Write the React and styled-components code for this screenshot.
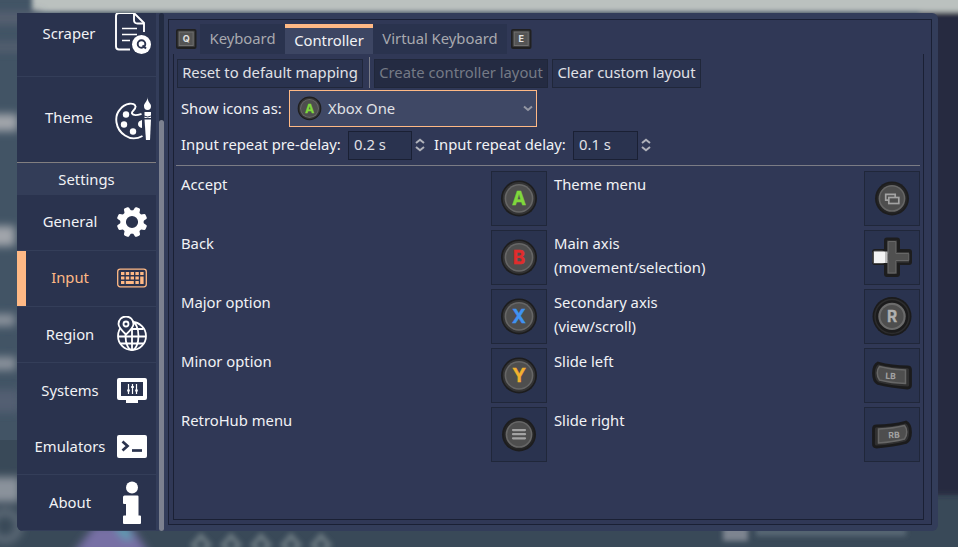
import React from "react";
import styled, { createGlobalStyle, css } from "styled-components";

const c = {
  dialog: "#333d5a",
  panel: "#303856",
  dark: "#2a334e",
  line: "#1a2034",
  text: "#f1f2f5",
  soft: "#e0e1e6",
  accent: "#ffb985",
};

const Global = createGlobalStyle`
  *{box-sizing:border-box}
  html,body{margin:0;padding:0}
  body{font-family:"Noto Sans",sans-serif;font-size:14.8px;color:${c.text};overflow:hidden}
`;

const Screen = styled.div`
  position: relative;
  width: 958px;
  height: 547px;
  padding: 13px 20px 16px 17px;
  overflow: hidden;
  background: #3a4b5c;
`;
const Backdrop = styled.svg`
  position: absolute;
  inset: 0;
`;
const Dialog = styled.div`
  position: relative;
  display: flex;
  width: 921px;
  height: 518px;
  background: ${c.dialog};
  border-radius: 0 6px 6px 6px;
  overflow: hidden;
`;
const Sidebar = styled.nav`
  width: 139px;
  height: 518px;
  overflow: hidden;
  background: ${c.dark};
`;
const NavList = styled.div`
  margin-top: -21px;
`;
const NavItem = styled.div`
  display: flex;
  align-items: center;
  height: ${(p) => (p.$tall ? 85 : 56)}px;
  padding-right: ${(p) => (p.$tall ? 5 : 9)}px;
  padding-bottom: 1px;
  border-bottom: 1px solid ${(p) => (p.$plain ? "transparent" : "#343e59")};
  color: ${(p) => (p.$active ? c.accent : c.text)};
  box-shadow: ${(p) => (p.$active ? `inset 9px 0 ${c.accent}` : "none")};
  svg { flex: none; display: block; }
`;
const NavLabel = styled.span`
  flex: 1;
  text-align: center;
  padding: 0 0 ${(p) => (p.$raised ? 3 : 1)}px 6px;
`;
const SectionTitle = styled.div`
  height: 33px;
  border-top: 1px solid #827f80;
  background: #333d58;
  display: flex;
  align-items: center;
  justify-content: center;
`;
const ScrollTrack = styled.div`
  width: 5px;
  margin-left: 3px;
  padding-top: 107px;
  background: #222b41;
  border-radius: 3px;
`;
const ScrollThumb = styled.div`
  height: 411px;
  background: #7c818f;
  border-radius: 3px;
`;
const Main = styled.main`
  width: 764px;
  height: 506px;
  margin: 6px 0 0 4px;
  padding: 4px 7px 4px 4px;
  border: 1px solid ${c.line};
  background: ${c.panel};
`;
const TabBar = styled.div`
  display: flex;
  align-items: center;
  height: 30px;
  padding-left: 3px;
`;
const Tab = styled.div`
  height: 30px;
  width: ${(p) => p.$w}px;
  display: flex;
  align-items: center;
  justify-content: center;
  background: ${c.dark};
  color: #a8a9af;
  padding-bottom: 2px;
  ${(p) => p.$active && css`
    background: #3d4663;
    color: ${c.text};
    border-top: 4px solid ${c.accent};
    padding-bottom: 2px;
  `}
`;
const KeyCap = styled.svg`
  flex: none;
  margin: ${(p) => (p.$right ? "0 0 0 4px" : "0 3px 0 0")};
`;
const TabPanel = styled.section`
  height: 466px;
  border: 1px solid ${c.line};
  border-top: 0;
  padding: 3px 3px 0 2px;
`;
const Toolbar = styled.div`
  display: flex;
  align-items: center;
  height: 32px;
  padding-left: 1px;
`;
const Button = styled.button`
  width: ${(p) => p.$w}px;
  height: 29px;
  padding: 0 0 2px;
  font: inherit;
  white-space: nowrap;
  color: ${c.soft};
  background: #2a334f;
  border: 1px solid #20273a;
  &:disabled { color: #757a86; background: #242b42; }
`;
const Divider = styled.div`
  width: 1px;
  height: 31px;
  margin: 0 4px 1px 6px;
  background: #7b7d88;
`;
const Gap = styled.div`
  width: 4px;
`;
const Field = styled.div`
  display: flex;
  align-items: center;
  padding-left: 5px;
  height: ${(p) => p.$h}px;
  margin-top: ${(p) => p.$mt}px;
`;
const FieldLabel = styled.span`
  width: ${(p) => p.$w}px;
  white-space: nowrap;
  padding-bottom: ${(p) => (p.$raised ? 3 : 1)}px;
`;
const Select = styled.div`
  display: flex;
  align-items: center;
  width: 248px;
  height: 37px;
  padding: 0 3px 0 7px;
  background: #3f4865;
  border: 1px solid ${c.accent};
`;
const SelectText = styled.span`
  flex: 1;
  padding: 0 0 1px 6px;
  color: ${c.soft};
`;
const NumberBox = styled.div`
  width: ${(p) => p.$w}px;
  height: 29px;
  padding-left: 5px;
  line-height: 25px;
  color: ${c.soft};
  background: #2a334f;
  border: 1px solid ${c.line};
`;
const Spinner = styled.svg`
  margin: 0 9px 2px 3px;
`;
const Rule = styled.div`
  height: 1px;
  background: #7b7c85;
  margin-top: 5px;
`;
const Mappings = styled.div`
  display: grid;
  grid-template-columns: 315px 56px 7px 310px 56px;
  grid-auto-rows: 55px;
  row-gap: 4px;
  margin-top: 5px;
`;
const Action = styled.div`
  grid-column: ${(p) => p.$col};
  padding: ${(p) => (p.$col === 1 ? "1px 0 0 5px" : "1px 0 0 0")};
  line-height: 24px;
  white-space: pre-line;
`;
const Slot = styled.div`
  width: 56px;
  height: 55px;
  background: #2a334f;
  border: 1px solid #20273a;
  svg { display: block; margin: -1px; }
`;

const fontUI = '"Inter", sans-serif';

const Letter = ({ x = 28, y, size, fill, children, ...rest }) => (
  <text x={x} y={y} textAnchor="middle" fontFamily={fontUI} fontWeight="700" fontSize={size} fill={fill} {...rest}>
    {children}
  </text>
);

const Disc = ({ r = 18, ring = "#333334" }) => (
  <>
    <circle cx="28" cy="27.4" r={r} fill="#1d1d1e" />
    <circle cx="28" cy="27.4" r={r - 1.7} fill={ring} />
    <circle cx="28" cy="27.4" r={r - 3.6} fill="#666" />
    <circle cx="28" cy="27.4" r={r - 5.2} fill="#4e4e4e" />
  </>
);

const faces = { A: "#80d83c", B: "#e02c2c", X: "#3f93f2", Y: "#f2b12f" };

function Glyph({ name }) {
  if (faces[name])
    return (
      <>
        <Disc />
        <Letter y="34" size="18.8" fill={faces[name]} stroke={faces[name]} strokeWidth=".4">{name}</Letter>
      </>
    );
  switch (name) {
    case "menu":
      return (
        <>
          <Disc r={17} ring="#242425" />
          <path d="M22 23.1h12M22 27.2h12M22 31.3h12" stroke="#a3a3a3" strokeWidth="2.2" strokeLinecap="round" />
        </>
      );
    case "view":
      return (
        <>
          <Disc r={17} ring="#242425" />
          <path d="M24.5 29.2h-2.800v-5.900h9.500v2.600" fill="none" stroke="#a3a3a3" strokeWidth="1.7" />
          <rect x="24.8" y="26.5" width="10" height="6" fill="#4e4e4e" stroke="#a3a3a3" strokeWidth="1.7" />
        </>
      );
    case "dpad":
      return (
        <>
          <path d="M23 7.500h10q3 0 3 3V19h9q3 0 3 3v10q0 3-3 3h-9v9q0 3-3 3H23q-3 0-3-3v-9h-9q-3 0-3-3V22q0-3 3-3h9v-8.500q0-3 3-3z" fill="#1d1d1e" />
          <path d="M23 10.500h10v11.500h12v10.500H33v11.500H23V32.500H11V22h12z" fill="#3a3a3a" />
          <path d="M24.200 11.500h7.600v12h13v7h-13v12.500h-7.600V30.500h-13v-7h13z" fill="#505050" stroke="#676767" />
          <rect x="8.500" y="20.500" width="12" height="13.500" rx="2.500" fill="#505050" />
          <rect x="10" y="21.500" width="11" height="11.500" fill="#f4f4f4" />
          <rect x="21" y="21.500" width="2.500" height="11.500" fill="#bdbdbd" />
        </>
      );
    case "stick":
      return (
        <>
          <circle cx="28" cy="27.400" r="19.500" fill="#1b1b1c" />
          <circle cx="28" cy="27.400" r="17" fill="none" stroke="#2c2c2d" strokeWidth="1.500" />
          <circle cx="28" cy="27.400" r="13.700" fill="#6b6b6b" />
          <circle cx="28" cy="27.400" r="11.500" fill="#4e4e4e" />
          <Letter y="33" size="15.500" fill="#b0b0b0" stroke="#b0b0b0" strokeWidth=".3">R</Letter>
        </>
      );
    case "lb":
      return (
        <>
          <path d="M14 15Q28 18.800 43.500 18.800q3 0 3 3V37q0 3-3 3Q26 38.800 14 35.500C8 32.500 8 18 14 15z" fill="#303031" stroke="#1b1b1c" strokeWidth="2.800" />
          <path d="M15.500 18.500Q27 21.500 41.500 22V35.500Q27 35 15.500 32C12.500 28 12.500 22 15.500 18.500z" fill="#4e4e4e" stroke="#676767" strokeWidth="1.500" />
          <Letter x="26.500" y="31" size="8.500" fill="#a3a3a3" transform="rotate(3 27 28)">LB</Letter>
        </>
      );
    default:
      return (
        <>
          <path d="M42 15Q28 18.800 12.500 18.800q-3 0-3 3V37q0 3 3 3Q30 38.800 42 35.500C48 32.500 48 18 42 15z" fill="#303031" stroke="#1b1b1c" strokeWidth="2.800" />
          <path d="M40.500 18.500Q29 21.500 14.500 22V36Q29 35 40.500 32C43.500 28 43.500 22 40.500 18.500z" fill="#4e4e4e" stroke="#676767" strokeWidth="1.500" />
          <Letter x="30" y="31" size="8.500" fill="#a3a3a3" transform="rotate(-3 30 28)">RB</Letter>
        </>
      );
  }
}

const GlyphSvg = ({ name }) => (
  <svg width="56" height="55" viewBox="0 0 56 55"><Glyph name={name} /></svg>
);

const Key = ({ label, right }) => (
  <KeyCap $right={right} width="21" height="20" viewBox="0 0 21 20">
    <rect width="20.500" height="20" rx="2" fill="#202021" />
    <rect x="1.500" y="1.500" width="17.500" height="16.500" rx="1" fill="#393939" />
    <rect x="3.200" y="3" width="14" height="13.500" fill="#545454" stroke="#707070" />
    <Letter x="10.300" y="13.100" size="9" fill="#e2e2e2">{label}</Letter>
  </KeyCap>
);

const ScraperIcon = () => (
  <svg width="36" height="43" viewBox="0 0 36 43" fill="none" stroke="#fff" strokeWidth="1.900">
    <path d="M15 37.500H4Q1 37.500 1 34.500V4Q1 1 4 1h15l10 10v9" />
    <path d="M19 1v7q0 3.500 3.500 3.500H29" />
    <path d="M7 16.500h15M7 22.500h15M7 28.500h8" strokeWidth="1.600" />
    <circle cx="26.500" cy="32.500" r="9.500" fill="#fff" stroke="none" />
    <circle cx="26.500" cy="32" r="3.800" stroke={c.dark} />
    <path d="M27.500 33.500l3.500 3" stroke={c.dark} />
  </svg>
);
const ThemeIcon = () => (
  <svg width="36" height="43" viewBox="0 0 36 43" fill="none" stroke="#fff" strokeWidth="1.900">
    <path d="M27.500 39Q18 44 10 38.500C0 32 -1 19 5 12.500C10 5.500 20 5 20.500 9.500C21 13 16 14 17 16.500C18.500 19.500 23 18 26.500 17" />
    <g fill="#fff" stroke="none">
      <circle cx="11" cy="17.500" r="3.200" /><circle cx="9" cy="27.500" r="3.200" />
      <circle cx="18" cy="34.500" r="3.200" /><path d="M27 23v8q-4-1-4-4t4-4z" />
      <path d="M33 0C32 5 36 6 36 9q0 4-3.500 4T29 9c0-3 3-4 4-9zM29.500 15h6.500v6h-6.500z" />
      <path d="M29.500 22.500H36L35 43.500h-4z" />
    </g>
    <path d="M29 19q4 2 7 0" stroke={c.dark} strokeWidth="1" />
  </svg>
);
const GearIcon = () => (
  <svg width="30" height="30" viewBox="0 0 30 30">
    <g fill="#fff">
      {[22.5, 67.5, 112.5, 157.5, 202.5, 247.5, 292.5, 337.5].map((a) => (
        <path key={a} d="M11.400 5L12.200.7Q12.500-.3 13.700-.3h2.600q1.200 0 1.500 1L18.600 5z" transform={`rotate(${a} 15 15)`} />
      ))}
    </g>
    <circle cx="15" cy="15" r="8.900" fill="none" stroke="#fff" strokeWidth="5.600" />
  </svg>
);
const KeyboardIcon = () => (
  <svg width="30" height="30" viewBox="0 0 30 30" fill={c.accent}>
    <rect x=".7" y="6.200" width="28.600" height="17.600" rx="2.500" fill="none" stroke={c.accent} strokeWidth="1.300" />
    {[4, 8.8, 13.6, 18.4, 23.2].map((x) => <rect key={x} x={x} y="9" width="3.400" height="3" />)}
    {[4, 8.8, 13.6, 18.4].map((x) => <rect key={x} x={x} y="13.500" width="3.400" height="3" />)}
    <path d="M4 18h3.400v3H4zM8.800 18h8v3h-8zM18.400 18h3.400v3h-3.400zM23.200 13.500h3.400V21h-3.400z" />
  </svg>
);
const RegionIcon = () => (
  <svg width="30" height="36" viewBox="0 0 30 36" fill="none" stroke="#fff" strokeWidth="1.800">
    <circle cx="15" cy="20" r="14" />
    <ellipse cx="15" cy="20" rx="6.500" ry="14" />
    <path d="M15 6v28M1 20.500h28M3.500 27.500h23M14 13h12.500" />
    <path d="M9 18.500Q1.500 11.500 1.500 8a7.500 7.500 0 0 1 15 0Q16.500 11.500 9 18.500z" fill={c.dark} />
    <circle cx="9" cy="8" r="2.500" />
  </svg>
);
const SystemsIcon = () => (
  <svg width="30" height="30" viewBox="0 0 30 30">
    <path fillRule="evenodd" fill="#fff" d="M2 3h26q2 0 2 2v18q0 2-2 2h-7v3H9v-3H2q-2 0-2-2V5q0-2 2-2zM4 7v14h22V7z" />
    <path d="M11.500 9v10M15.500 9v10M19.500 9v10" stroke="#fff" strokeWidth="1.200" />
    <path d="M10.200 15.500h2.600M14.200 12h2.600M18.200 15.500h2.600" stroke="#fff" strokeWidth="2" />
  </svg>
);
const TerminalIcon = () => (
  <svg width="30" height="30" viewBox="0 0 30 30">
    <rect y="4" width="30" height="23" rx="2" fill="#fff" />
    <path d="M5.500 10.500l5 4.500-5 4.500" fill="none" stroke={c.dark} strokeWidth="2.700" />
    <path d="M15 19.500h10" stroke={c.dark} strokeWidth="2.700" />
  </svg>
);
const InfoIcon = () => (
  <svg width="30" height="43" viewBox="0 0 30 43" fill="#fff">
    <circle cx="15" cy="6.500" r="6" />
    <path d="M7.500 14.500h13q1 0 1 1v19h1.500q1 0 1 1V42q0 1-1 1H7q-1 0-1-1v-6.500q0-1 1-1h2v-11.500H7q-1 0-1-1v-6q0-1.500 1.500-1.500z" />
  </svg>
);

const Arrows = () => (
  <Spinner width="10" height="14" viewBox="0 0 10 14" fill="none" stroke="#b0b2ba" strokeWidth="2">
    <path d="M1 5L5 1.700L9 5M1 9L5 12.300L9 9" />
  </Spinner>
);

const topItems = [["Scraper", ScraperIcon], ["Theme", ThemeIcon]];
const settings = [
  ["General", GearIcon], ["Input", KeyboardIcon], ["Region", RegionIcon],
  ["Systems", SystemsIcon], ["Emulators", TerminalIcon], ["About", InfoIcon],
];
const mappings = [
  ["Accept", "A", "Theme menu", "view"],
  ["Back", "B", "Main axis\n(movement/selection)", "dpad"],
  ["Major option", "X", "Secondary axis\n(view/scroll)", "stick"],
  ["Minor option", "Y", "Slide left", "lb"],
  ["RetroHub menu", "menu", "Slide right", "rb"],
];

const BlurredHome = () => (
  <Backdrop width="958" height="547" viewBox="0 0 958 547">
    <defs>
      <filter id="soft" x="-10%" y="-10%" width="120%" height="120%"><feGaussianBlur stdDeviation="2.500" /></filter>
      <filter id="wide" x="-50%" y="-50%" width="200%" height="200%"><feGaussianBlur stdDeviation="4" /></filter>
    </defs>
    <rect width="958" height="547" fill="#394958" />
    <rect width="60" height="440" fill="#425465" />
    <g filter="url(#soft)">
      <rect x="920" y="-10" width="60" height="505" fill="#272c40" />
      <rect x="32" y="-20" width="950" height="32" fill="#bbc1bf" />
    </g>
    <g filter="url(#wide)">
      <path d="M-10 12h50v12h-50zM-10 43h50v8h-50z" fill="#566071" />
      <path d="M-10 226h25v20h-25zM-10 114h28v17h-28z" fill="#a1a5ab" />
      <path d="M-10 314h25v12h-25zM-10 357h26v13h-26zM-10 477h30v25h-30z" fill="#8a929b" />
      <path d="M-10 390h30v22h-30z" fill="#525f72" />
      <circle cx="5" cy="526" r="14" fill="none" stroke="#677480" strokeWidth="6" />
      <path d="M95 525h35l20 30H72z" fill="#776fa5" />
      <path d="M118 526l12 12" stroke="#57a4b5" strokeWidth="8" />
    </g>
    <g filter="url(#soft)" fill="none" stroke="#68767e" strokeWidth="5">
      {[201, 231, 261, 291, 321].map((x) => <path key={x} d={`M${x} 536l8 9l-8 9l-8-9z`} />)}
      <rect x="723" y="520" width="25" height="21" fill="#7d8490" stroke="none" />
      <path d="M756 532h150" stroke="#596775" strokeWidth="8" />
    </g>
  </Backdrop>
);

export default function App() {
  return (
    <Screen>
      <Global />
      <BlurredHome />
      <Dialog>
        <Sidebar>
          <NavList>
            {topItems.map(([label, Icon], i) => (
              <NavItem key={label} $tall $plain={i === 1}>
                <NavLabel $raised={i === 1}>{label}</NavLabel><Icon />
              </NavItem>
            ))}
            <SectionTitle>Settings</SectionTitle>
            {settings.map(([label, Icon], i) => (
              <NavItem key={label} $active={label === "Input"} $plain={label === "Systems"}>
                <NavLabel $raised={i < 2}>{label}</NavLabel><Icon />
              </NavItem>
            ))}
          </NavList>
        </Sidebar>
        <ScrollTrack><ScrollThumb /></ScrollTrack>
        <Main>
          <TabBar>
            <Key label="Q" />
            <Tab $w={85}>Keyboard</Tab>
            <Tab $w={88} $active>Controller</Tab>
            <Tab $w={134}>Virtual Keyboard</Tab>
            <Key label="E" right />
          </TabBar>
          <TabPanel>
            <Toolbar>
              <Button $w={186}>Reset to default mapping</Button>
              <Divider />
              <Button $w={174} disabled>Create controller layout</Button>
              <Gap />
              <Button $w={149}>Clear custom layout</Button>
            </Toolbar>
            <Field $h={37} $mt={1}>
              <FieldLabel $w={108}>Show icons as:</FieldLabel>
              <Select>
                <svg width="25" height="25" viewBox="9 8.500 38 38"><Glyph name="A" /></svg>
                <SelectText>Xbox One</SelectText>
                <svg width="10" height="7" viewBox="0 0 10 7" fill="none" stroke="#9497a3" strokeWidth="2"><path d="M1 1.500l4 3.500l4-3.500" /></svg>
              </Select>
            </Field>
            <Field $h={29} $mt={4}>
              <FieldLabel $raised $w={167}>Input repeat pre-delay:</FieldLabel>
              <NumberBox $w={64}>0.2 s</NumberBox>
              <Arrows />
              <FieldLabel $raised $w={139}>Input repeat delay:</FieldLabel>
              <NumberBox $w={65}>0.1 s</NumberBox>
              <Arrows />
            </Field>
            <Rule />
            <Mappings>
              {mappings.map(([a, ga, b, gb]) => (
                <React.Fragment key={a}>
                  <Action $col={1}>{a}</Action>
                  <Slot><GlyphSvg name={ga} /></Slot>
                  <Action $col={4}>{b}</Action>
                  <Slot><GlyphSvg name={gb} /></Slot>
                </React.Fragment>
              ))}
            </Mappings>
          </TabPanel>
        </Main>
      </Dialog>
    </Screen>
  );
}
